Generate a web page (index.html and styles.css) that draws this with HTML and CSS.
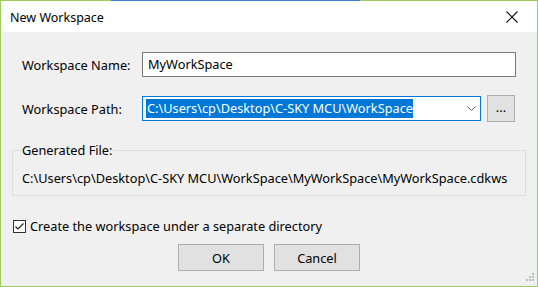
FILE: index.html
```html
<!DOCTYPE html>
<html lang="en">
<head>
    <meta charset="UTF-8">
    <title>New Workspace</title>
    <link rel="stylesheet" href="styles.css">
</head>
<body>
    <div class="window">
        <div class="accent"></div>
        <div class="titlebar">
            <span class="title">New Workspace</span>
            <svg class="close" width="12" height="12" viewBox="0 0 12 12">
                <path d="M0.5 0.5 L11.5 11.5 M11.5 0.5 L0.5 11.5" stroke="#111" stroke-width="1.1" fill="none"/>
            </svg>
        </div>

        <div class="content">
            <div class="form-row">
                <label class="label">Workspace Name:</label>
                <div class="textbox">MyWorkSpace</div>
            </div>
            <div class="form-row path-row">
                <label class="label">Workspace Path:</label>
                <div class="combo">
                    <span class="selected">C:\Users\cp\Desktop\C-SKY MCU\WorkSpace</span>
                    <svg class="chevron" width="9" height="5" viewBox="0 0 9 5">
                        <path d="M0.5 0.5 L4.5 4.5 L8.5 0.5" stroke="#606060" stroke-width="1" fill="none"/>
                    </svg>
                </div>
                <button class="btn browse">...</button>
            </div>

            <fieldset class="group">
                <legend>Generated File:</legend>
                <div class="gen-path">C:\Users\cp\Desktop\C-SKY MCU\WorkSpace\MyWorkSpace\MyWorkSpace.cdkws</div>
            </fieldset>

            <label class="check-row">
                <span class="checkbox">
                    <svg width="11" height="11" viewBox="0 0 11 11">
                        <path d="M1.5 5.5 L4 8 L9.5 2.5" stroke="#222" stroke-width="1.2" fill="none"/>
                    </svg>
                </span>
                Create the workspace under a separate directory
            </label>

            <div class="actions">
                <button class="btn">OK</button>
                <button class="btn">Cancel</button>
            </div>
        </div>

        <svg class="grip" width="11" height="11" viewBox="0 0 11 11">
            <rect x="8" y="0" width="2" height="2" fill="#bcbcbc"/>
            <rect x="5" y="3" width="2" height="2" fill="#bcbcbc"/>
            <rect x="8" y="3" width="2" height="2" fill="#bcbcbc"/>
            <rect x="2" y="6" width="2" height="2" fill="#bcbcbc"/>
            <rect x="5" y="6" width="2" height="2" fill="#bcbcbc"/>
            <rect x="8" y="6" width="2" height="2" fill="#bcbcbc"/>
        </svg>
    </div>
</body>
</html>
```

FILE: styles.css
```css
body {
    margin: 0;
    padding: 0;
    font-family: "Noto Sans", "Open Sans", sans-serif;
    font-size: 12.75px;
    color: #000;
}
.window {
    position: relative;
    width: 538px;
    height: 287px;
    box-sizing: border-box;
    border: 1px solid #9dcd5e;
    background-color: #f0f0f0;
    display: flex;
    flex-direction: column;
}
.accent {
    position: absolute;
    top: -1px;
    left: 110px;
    width: 249px;
    height: 1px;
    background-color: #3d7fd5;
}
.titlebar {
    height: 31px;
    background-color: #fff;
    display: flex;
    align-items: center;
    justify-content: space-between;
    padding: 0 19px 0 9px;
}
.title {
    font-size: 12.5px;
    margin-top: 1px;
}
.close {
    display: block;
}
.content {
    padding: 20px 0 0 11px;
    display: flex;
    flex-direction: column;
}
.form-row {
    display: flex;
    align-items: center;
    padding-left: 10px;
    height: 25px;
}
.path-row {
    margin-top: 18px;
    height: 27px;
}
.label {
    width: 120px;
    flex-shrink: 0;
}
.textbox {
    box-sizing: border-box;
    width: 374px;
    height: 25px;
    border: 1px solid #7a7a7a;
    background-color: #fff;
    padding: 0 5px;
    line-height: 23px;
}
.combo {
    box-sizing: border-box;
    width: 339px;
    height: 25px;
    border: 1px solid #0078d7;
    background-color: #fff;
    display: flex;
    align-items: center;
    justify-content: space-between;
    padding: 0 4px 0 3px;
}
.selected {
    background-color: #0078d7;
    color: #fff;
    line-height: 19px;
    padding-left: 1px;
}
.chevron {
    display: block;
}
.btn {
    box-sizing: border-box;
    width: 86px;
    height: 27px;
    border: 1px solid #adadad;
    background-color: #e1e1e1;
    font-family: inherit;
    font-size: 12.75px;
    color: #000;
    padding: 0;
}
.browse {
    width: 28px;
    margin-left: 6px;
    padding-bottom: 4px;
}
.group {
    margin: 20px 0 0 0;
    width: 514px;
    box-sizing: border-box;
    border: 1px solid #dcdcdc;
    padding: 12px 9px 9px 9px;
}
.group legend {
    padding: 0 1px 0 0;
    line-height: 16px;
}
.gen-path {
    line-height: 16px;
}
.check-row {
    display: flex;
    align-items: center;
    margin-top: 22px;
    padding-left: 1px;
    line-height: 16px;
}
.checkbox {
    box-sizing: border-box;
    width: 13px;
    height: 13px;
    border: 1px solid #333;
    background-color: #fff;
    margin-right: 4px;
    display: flex;
    align-items: center;
    justify-content: center;
}
.checkbox svg {
    display: block;
}
.actions {
    display: flex;
    justify-content: center;
    gap: 10px;
    margin-top: 10px;
    margin-left: -11px;
}
.grip {
    position: absolute;
    right: 2px;
    bottom: 2px;
}
```
